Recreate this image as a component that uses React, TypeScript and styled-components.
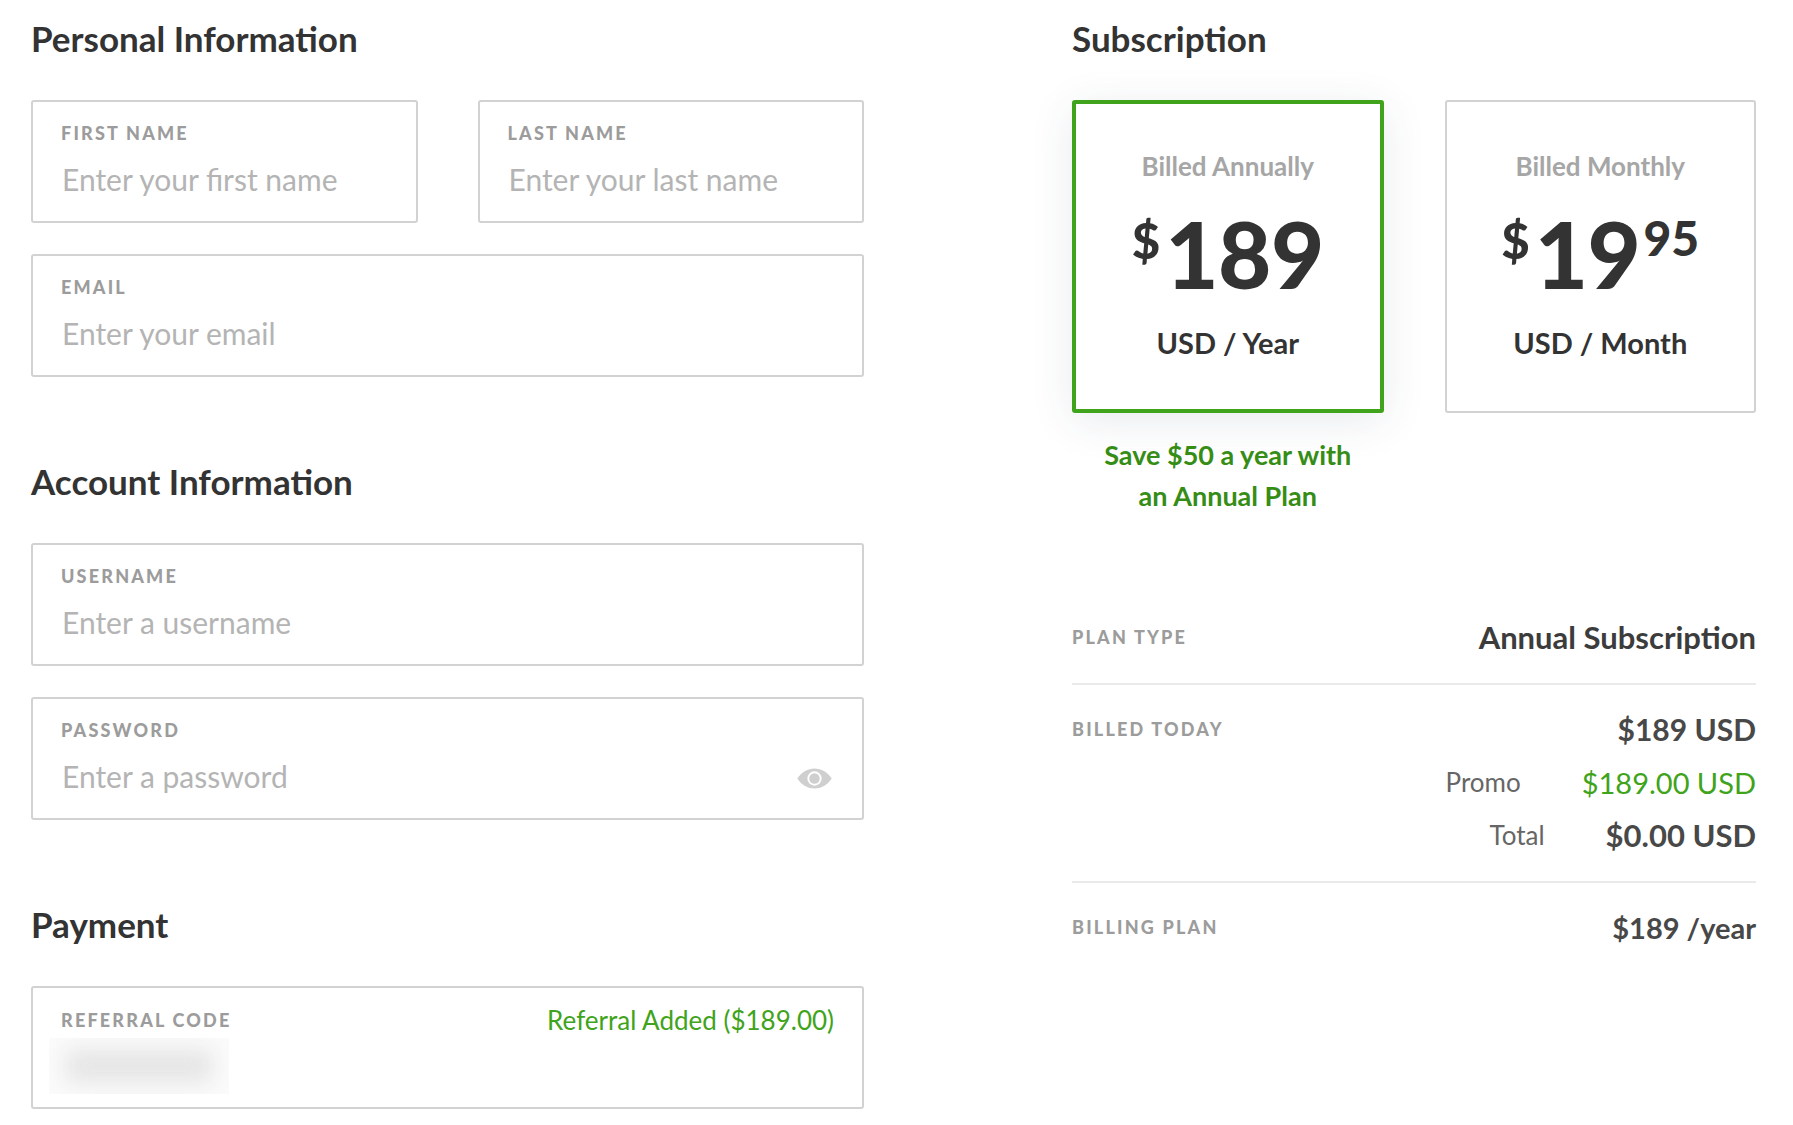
import React from "react";
import styled, { createGlobalStyle } from "styled-components";

const GlobalStyle = createGlobalStyle`
  html, body {
    margin: 0;
    padding: 0;
    background: #ffffff;
    font-family: "Lato", "Open Sans", sans-serif;
    color: #333333;
  }
`;

const Page = styled.div`
  width: 1793px;
  height: 1125px;
  box-sizing: border-box;
  padding: 19px 37px 0 31px;
  display: flex;
  justify-content: space-between;
  overflow: hidden;
`;

const LeftColumn = styled.div`
  width: 833px;
`;

const RightColumn = styled.div`
  width: 684px;
`;

const Section = styled.section`
  margin-bottom: 85px;
`;

const Heading = styled.h2`
  margin: 0 0 41px;
  height: 40px;
  font-size: 35px;
  line-height: 38px;
  font-weight: 700;
  color: #333333;
`;

const Fields = styled.div`
  display: flex;
  flex-direction: column;
  gap: 31px;
`;

const FieldRow = styled.div`
  display: grid;
  grid-template-columns: 1fr 1fr;
  gap: 60px;
`;

const FieldBox = styled.div`
  height: 123px;
  box-sizing: border-box;
  padding: 21px 28px 0 28px;
  border: 2px solid #d2d2d2;
  border-radius: 3px;
  background: #ffffff;
  position: relative;
`;

const FieldLabel = styled.div`
  font-size: 18px;
  line-height: 20px;
  font-weight: 900;
  letter-spacing: 2.2px;
  color: #9c9c9c;
`;

const FieldInput = styled.input`
  display: block;
  width: 100%;
  padding: 0 0 0 1px;
  margin-top: 16px;
  height: 40px;
  border: none;
  outline: none;
  background: transparent;
  font-family: inherit;
  font-size: 30px;
  line-height: 40px;
  color: #333333;

  &::placeholder {
    color: #b4b4b4;
    opacity: 1;
  }
`;

const EyeIcon = styled.svg`
  position: absolute;
  right: 30px;
  top: 69px;
  width: 35px;
  height: 21px;
`;

const ReferralTop = styled.div`
  display: flex;
  justify-content: space-between;
  align-items: center;
`;

const ReferralNote = styled.span`
  font-size: 26px;
  line-height: 22px;
  color: #3fa31b;
`;

const BlurredCode = styled.div`
  width: 180px;
  height: 56px;
  margin: 7px 0 0 -12px;
  background: #fbfbfb;
  overflow: hidden;
  display: flex;
  align-items: center;
  justify-content: center;
`;

const BlurredInk = styled.div`
  width: 146px;
  height: 32px;
  background: #e4e4e4;
  filter: blur(11px);
`;

const Plans = styled.div`
  display: flex;
  gap: 61px;
`;

const PlanColumn = styled.div`
  width: 312px;
`;

const PlanCard = styled.div<{ $selected?: boolean }>`
  height: 313px;
  box-sizing: border-box;
  display: flex;
  flex-direction: column;
  align-items: center;
  padding-top: ${(p) => (p.$selected ? "44px" : "46px")};
  border: ${(p) => (p.$selected ? "4px solid #3fa31b" : "2px solid #d2d2d2")};
  border-radius: 3px;
  background: #ffffff;
  box-shadow: ${(p) =>
    p.$selected ? "0 8px 44px rgba(40, 60, 90, 0.1)" : "none"};
`;

const PlanName = styled.div`
  font-size: 26px;
  line-height: 36px;
  font-weight: 700;
  color: #a6a6a6;
`;

const Price = styled.div`
  display: flex;
  align-items: flex-start;
  height: 112px;
  margin-top: 14px;
  color: #333333;
  font-weight: 900;
`;

const Dollar = styled.span`
  font-size: 49px;
  line-height: 84px;
  margin-right: 5px;
`;

const Amount = styled.span`
  font-size: 92px;
  line-height: 112px;
  letter-spacing: -0.5px;
`;

const Cents = styled.span`
  font-size: 48px;
  line-height: 80px;
  margin-left: 3px;
`;

const PlanPeriod = styled.div`
  font-size: 29px;
  line-height: 40px;
  font-weight: 700;
  margin-top: 13px;
  color: #333333;
`;

const SaveNote = styled.div`
  margin-top: 21px;
  text-align: center;
  font-size: 27px;
  line-height: 41px;
  font-weight: 700;
  color: #358d16;
`;

const Summary = styled.div`
  margin-top: 77px;
`;

const SummaryRow = styled.div`
  display: flex;
  justify-content: space-between;
  align-items: flex-start;
  padding: 29px 0 31px;
  border-bottom: 2px solid #eaeaea;

  &:last-child {
    border-bottom: none;
  }
`;

const SummaryLabel = styled.div`
  font-size: 18px;
  line-height: 30px;
  font-weight: 900;
  letter-spacing: 2.2px;
  color: #9c9c9c;
`;

const SummaryValues = styled.div`
  display: flex;
  flex-direction: column;
  gap: 23px;
`;

const ValueLine = styled.div`
  display: flex;
  justify-content: flex-end;
  align-items: center;
  gap: 61px;
  height: 30px;
`;

const Value = styled.span<{ $size: number; $dark?: boolean }>`
  font-size: ${(p) => p.$size}px;
  font-weight: 700;
  color: ${(p) => (p.$dark ? "#3c3c3c" : "#484848")};
`;

const PromoValue = styled.span`
  font-size: 29px;
  color: #3fa31b;
`;

const LineLabel = styled.span`
  font-size: 26px;
  color: #666666;
`;

function Field({ label, placeholder }: { label: string; placeholder: string }) {
  return (
    <FieldBox>
      <FieldLabel>{label}</FieldLabel>
      <FieldInput placeholder={placeholder} readOnly />
    </FieldBox>
  );
}

export default function App() {
  return (
    <>
      <GlobalStyle />
      <Page>
        <LeftColumn>
          <Section>
            <Heading>Personal Information</Heading>
            <Fields>
              <FieldRow>
                <Field label="FIRST NAME" placeholder="Enter your first name" />
                <Field label="LAST NAME" placeholder="Enter your last name" />
              </FieldRow>
              <Field label="EMAIL" placeholder="Enter your email" />
            </Fields>
          </Section>
          <Section>
            <Heading>Account Information</Heading>
            <Fields>
              <Field label="USERNAME" placeholder="Enter a username" />
              <FieldBox>
                <FieldLabel>PASSWORD</FieldLabel>
                <FieldInput placeholder="Enter a password" readOnly />
                <EyeIcon viewBox="0 0 36 22">
                  <path
                    fill="#cfcfcf"
                    d="M0 11C4.500 4 11 .500 18 .500S31.500 4 36 11c-4.500 7-11 10.500-18 10.500S4.500 18 0 11z"
                  />
                  <circle cx="18" cy="11" r="7.500" fill="#ffffff" />
                  <circle cx="18" cy="11" r="5.500" fill="#cfcfcf" />
                </EyeIcon>
              </FieldBox>
            </Fields>
          </Section>
          <Section>
            <Heading>Payment</Heading>
            <FieldBox>
              <ReferralTop>
                <FieldLabel>REFERRAL CODE</FieldLabel>
                <ReferralNote>Referral Added ($189.00)</ReferralNote>
              </ReferralTop>
              <BlurredCode>
                <BlurredInk />
              </BlurredCode>
            </FieldBox>
          </Section>
        </LeftColumn>
        <RightColumn>
          <Heading>Subscription</Heading>
          <Plans>
            <PlanColumn>
              <PlanCard $selected>
                <PlanName>Billed Annually</PlanName>
                <Price>
                  <Dollar>$</Dollar>
                  <Amount>189</Amount>
                </Price>
                <PlanPeriod>USD / Year</PlanPeriod>
              </PlanCard>
              <SaveNote>
                Save $50 a year with
                <br />
                an Annual Plan
              </SaveNote>
            </PlanColumn>
            <PlanColumn>
              <PlanCard>
                <PlanName>Billed Monthly</PlanName>
                <Price>
                  <Dollar>$</Dollar>
                  <Amount>19</Amount>
                  <Cents>95</Cents>
                </Price>
                <PlanPeriod>USD / Month</PlanPeriod>
              </PlanCard>
            </PlanColumn>
          </Plans>
          <Summary>
            <SummaryRow>
              <SummaryLabel>PLAN TYPE</SummaryLabel>
              <ValueLine>
                <Value $size={31} $dark>
                  Annual Subscription
                </Value>
              </ValueLine>
            </SummaryRow>
            <SummaryRow>
              <SummaryLabel>BILLED TODAY</SummaryLabel>
              <SummaryValues>
                <ValueLine>
                  <Value $size={30}>$189 USD</Value>
                </ValueLine>
                <ValueLine>
                  <LineLabel>Promo</LineLabel>
                  <PromoValue>$189.00 USD</PromoValue>
                </ValueLine>
                <ValueLine>
                  <LineLabel>Total</LineLabel>
                  <Value $size={31}>$0.00 USD</Value>
                </ValueLine>
              </SummaryValues>
            </SummaryRow>
            <SummaryRow>
              <SummaryLabel>BILLING PLAN</SummaryLabel>
              <ValueLine>
                <Value $size={29}>$189 /year</Value>
              </ValueLine>
            </SummaryRow>
          </Summary>
        </RightColumn>
      </Page>
    </>
  );
}
